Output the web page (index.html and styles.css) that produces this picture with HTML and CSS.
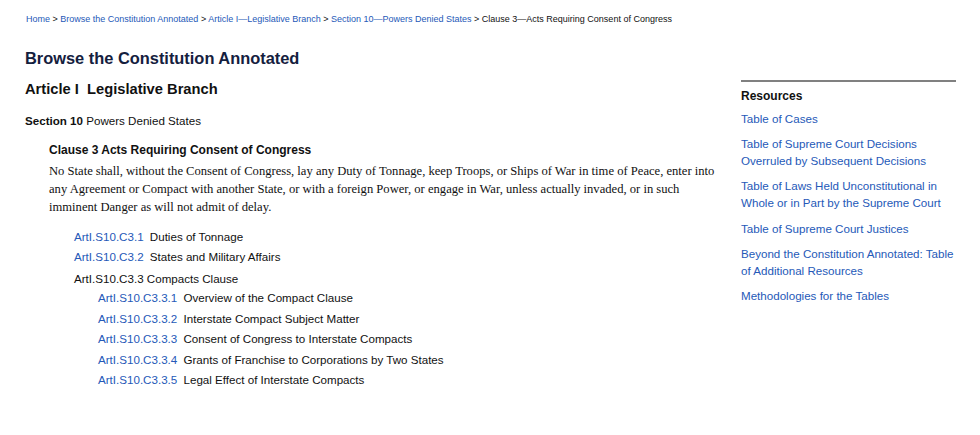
FILE: index.html
```html
<!DOCTYPE html>
<html lang="en">
<head>
	<meta charset="utf-8">
	<title>Clause 3—Acts Requiring Consent of Congress</title>
	<link rel="stylesheet" href="styles.css">
</head>
<body>
	<nav class="crumbs">
		<a href="#">Home</a> &gt;
		<a href="#">Browse the Constitution Annotated</a> &gt;
		<a href="#">Article I—Legislative Branch</a> &gt;
		<a href="#">Section 10—Powers Denied States</a> &gt;
		<span>Clause 3—Acts Requiring Consent of Congress</span>
	</nav>

	<div class="page">
		<main class="main-col">
			<h1 class="page-title">Browse the Constitution Annotated</h1>
			<h2 class="article-title">Article I&nbsp; Legislative Branch</h2>
			<h3 class="section-title"><b>Section 10</b> Powers Denied States</h3>

			<div class="clause">
				<h4 class="clause-title">Clause 3 Acts Requiring Consent of Congress</h4>
				<p class="clause-text">No State shall, without the Consent of Congress, lay any Duty of Tonnage, keep Troops, or Ships of War in time of Peace, enter into any Agreement or Compact with another State, or with a foreign Power, or engage in War, unless actually invaded, or in such imminent Danger as will not admit of delay.</p>

				<ul class="toc">
					<li><a href="#">ArtI.S10.C3.1</a> Duties of Tonnage</li>
					<li><a href="#">ArtI.S10.C3.2</a> States and Military Affairs</li>
					<li class="toc-group">ArtI.S10.C3.3 Compacts Clause
						<ul class="toc toc-sub">
							<li><a href="#">ArtI.S10.C3.3.1</a> Overview of the Compact Clause</li>
							<li><a href="#">ArtI.S10.C3.3.2</a> Interstate Compact Subject Matter</li>
							<li><a href="#">ArtI.S10.C3.3.3</a> Consent of Congress to Interstate Compacts</li>
							<li><a href="#">ArtI.S10.C3.3.4</a> Grants of Franchise to Corporations by Two States</li>
							<li><a href="#">ArtI.S10.C3.3.5</a> Legal Effect of Interstate Compacts</li>
						</ul>
					</li>
				</ul>
			</div>
		</main>

		<aside class="side-col">
			<h3 class="side-title">Resources</h3>
			<ul class="side-links">
				<li><a href="#">Table of Cases</a></li>
				<li><a href="#">Table of Supreme Court Decisions Overruled by Subsequent Decisions</a></li>
				<li><a href="#">Table of Laws Held Unconstitutional in Whole or in Part by the Supreme Court</a></li>
				<li><a href="#">Table of Supreme Court Justices</a></li>
				<li><a href="#">Beyond the Constitution Annotated: Table of Additional Resources</a></li>
				<li><a href="#">Methodologies for the Tables</a></li>
			</ul>
		</aside>
	</div>
</body>
</html>
```

FILE: styles.css
```css
	body {
		margin: 0;
		font-family: "Liberation Sans", Arial, sans-serif;
		color: #111;
		background: #fff;
	}

	a {
		color: #2559b8;
		text-decoration: none;
	}

	.crumbs {
		padding: 13px 0 0 26px;
		font-size: 9px;
		line-height: 12px;
		color: #111;
	}

	.page {
		display: flex;
		gap: 25px;
		padding-left: 25px;
	}

	.main-col {
		width: 691px;
	}

	.page-title {
		margin: 22px 0 0;
		font-size: 16.4px;
		line-height: 22px;
		color: #14203e;
	}

	.article-title {
		margin: 11px 0 0;
		font-size: 14.7px;
		line-height: 18px;
		color: #111;
	}

	.section-title {
		margin: 15px 0 0;
		font-size: 11.6px;
		line-height: 16px;
		font-weight: normal;
	}

	.clause {
		padding-left: 24px;
	}

	.clause-title {
		margin: 13px 0 0;
		font-size: 12px;
		line-height: 16px;
	}

	.clause-text {
		margin: 4px 0 0;
		font-family: "Liberation Serif", Georgia, serif;
		font-size: 12.6px;
		line-height: 18px;
	}

	.toc {
		list-style: none;
		margin: 13px 0 0;
		padding-left: 25px;
		font-size: 11.6px;
		line-height: 16px;
	}

	.toc li {
		margin-bottom: 4.2px;
	}

	.toc a {
		margin-right: 3px;
	}

	.toc-group {
		padding-top: 2px;
	}

	.toc-sub {
		margin-top: 3px;
		padding-left: 24px;
	}

	.toc-sub li {
		margin-bottom: 4.5px;
	}

	.side-col {
		width: 215px;
		margin-top: 55px;
		border-top: 2px solid #808080;
		font-size: 11.6px;
	}

	.side-title {
		margin: 6px 0 0;
		font-size: 12px;
		line-height: 16px;
	}

	.side-links {
		list-style: none;
		margin: 6px 0 0;
		padding: 0;
		line-height: 17px;
	}

	.side-links li {
		margin-bottom: 8.2px;
	}
```
